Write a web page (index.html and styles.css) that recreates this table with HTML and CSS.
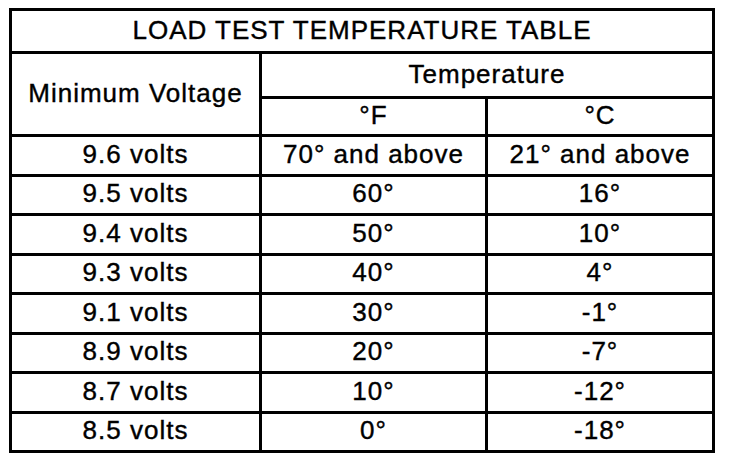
FILE: index.html
```html
<!DOCTYPE html>
<html lang="en">
<head>
  <meta charset="UTF-8" />
  <title>Load Test Temperature Table</title>
  <link rel="stylesheet" href="styles.css">
</head>
<body>
  <table class="load-table">
    <colgroup>
      <col class="col-volt">
      <col class="col-f">
      <col class="col-c">
    </colgroup>
    <tr class="row-title">
      <th colspan="3">LOAD TEST TEMPERATURE TABLE</th>
    </tr>
    <tr class="row-temp">
      <th rowspan="2">Minimum Voltage</th>
      <th colspan="2">Temperature</th>
    </tr>
    <tr class="row-unit">
      <th>°F</th>
      <th>°C</th>
    </tr>
    <tr><td>9.6 volts</td><td>70° and above</td><td>21° and above</td></tr>
    <tr><td>9.5 volts</td><td>60°</td><td>16°</td></tr>
    <tr><td>9.4 volts</td><td>50°</td><td>10°</td></tr>
    <tr><td>9.3 volts</td><td>40°</td><td>4°</td></tr>
    <tr><td>9.1 volts</td><td>30°</td><td>-1°</td></tr>
    <tr><td>8.9 volts</td><td>20°</td><td>-7°</td></tr>
    <tr><td>8.7 volts</td><td>10°</td><td>-12°</td></tr>
    <tr><td>8.5 volts</td><td>0°</td><td>-18°</td></tr>
  </table>
</body>
</html>
```

FILE: styles.css
```css
body {
  margin: 0;
  background: #fff;
  color: #000;
  font-family: "Liberation Sans", Arial, sans-serif;
}
.load-table {
  border-collapse: collapse;
  margin: 8px 0 0 9px;
  width: 703px;
  table-layout: fixed;
}
.col-volt {
  width: 250px;
}
.col-f {
  width: 226px;
}
.col-c {
  width: 227px;
}
.load-table th,
.load-table td {
  border: 3px solid #000;
  padding: 0 0 3px 0;
  text-align: center;
  font-weight: normal;
  font-size: 26px;
  letter-spacing: 1px;
  -webkit-text-stroke: 0.4px #000;
  height: 33.5px;
  line-height: 28px;
  white-space: nowrap;
}
.row-title th {
  height: 37px;
}
.row-temp th {
  height: 39px;
}
.row-unit th {
  height: 32px;
}
```
